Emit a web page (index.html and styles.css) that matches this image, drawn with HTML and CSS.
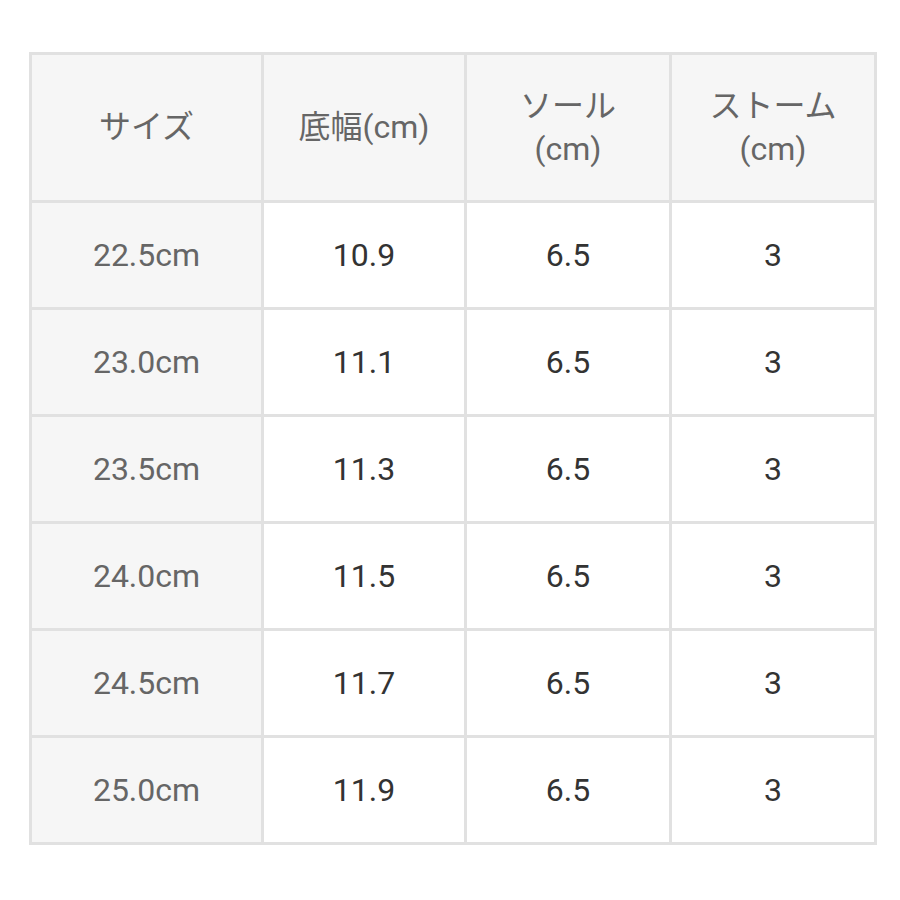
FILE: index.html
```html
<!DOCTYPE html>
<html lang="ja">
<head>
<meta charset="utf-8">
<link rel="stylesheet" href="styles.css">
</head>
<body>
<table class="size-table">
  <colgroup>
    <col class="c1"><col class="c2"><col class="c3"><col class="c4">
  </colgroup>
  <thead>
    <tr>
      <th>サイズ</th>
      <th>底幅(cm)</th>
      <th>ソール<br>(cm)</th>
      <th>ストーム<br>(cm)</th>
    </tr>
  </thead>
  <tbody>
    <tr><th class="rowhead">22.5cm</th><td>10.9</td><td>6.5</td><td>3</td></tr>
    <tr><th class="rowhead">23.0cm</th><td>11.1</td><td>6.5</td><td>3</td></tr>
    <tr><th class="rowhead">23.5cm</th><td>11.3</td><td>6.5</td><td>3</td></tr>
    <tr><th class="rowhead">24.0cm</th><td>11.5</td><td>6.5</td><td>3</td></tr>
    <tr><th class="rowhead">24.5cm</th><td>11.7</td><td>6.5</td><td>3</td></tr>
    <tr><th class="rowhead">25.0cm</th><td>11.9</td><td>6.5</td><td>3</td></tr>
  </tbody>
</table>
</body>
</html>
```

FILE: styles.css
```css
html, body {
  margin: 0;
  padding: 0;
  background: #ffffff;
}
body {
  padding: 52px 0 0 29px;
  font-family: Roboto, "Noto Sans CJK JP", sans-serif;
}
.size-table {
  border-collapse: collapse;
  table-layout: fixed;
  width: 847px;
  border: 3px solid #e1e1e1;
}
.c1 { width: 232px; }
.c2 { width: 203px; }
.c3 { width: 205px; }
.c4 { width: 205px; }
.size-table th,
.size-table td {
  border: 3px solid #e1e1e1;
  text-align: center;
  vertical-align: middle;
  padding: 0;
  font-size: 32px;
  font-weight: 400;
}
.size-table thead th {
  height: 145px;
  background: #f6f6f6;
  color: #666666;
  line-height: 43px;
}
.size-table tbody tr {
  height: 107px;
}
.size-table .rowhead {
  background: #f6f6f6;
  color: #666666;
}
.size-table td {
  background: #ffffff;
  color: #333333;
}
```
